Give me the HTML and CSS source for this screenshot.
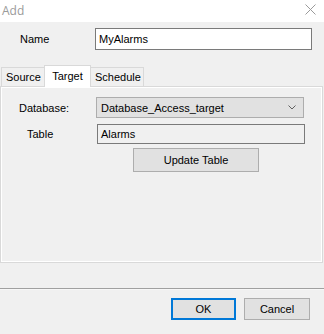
FILE: index.html
```html
<!DOCTYPE html>
<html lang="en">
<head>
  <meta charset="UTF-8">
  <title>Add</title>
  <link rel="stylesheet" href="styles.css">
</head>
<body>
  <div class="titlebar">
    <span class="title">Add</span>
    <svg class="close" width="11" height="11" viewBox="0 0 11 11">
      <path d="M0.5 0.5 L10.5 10.5 M10.5 0.5 L0.5 10.5" stroke="#9a9a9a" stroke-width="1" fill="none"/>
    </svg>
  </div>

  <div class="dialog">
    <div class="name-row">
      <label class="name-label">Name</label>
      <div class="textbox name-box">MyAlarms</div>
    </div>

    <div class="tabs">
      <div class="tab">Source</div>
      <div class="tab active">Target</div>
      <div class="tab">Schedule</div>
    </div>

    <div class="panel">
      <div class="row db-row">
        <label class="db-label">Database:</label>
        <div class="combo">
          <span>Database_Access_target</span>
          <svg class="chevron" width="8" height="5" viewBox="0 0 8 5">
            <path d="M0.5 0.5 L4 4 L7.5 0.5" stroke="#606060" stroke-width="1" fill="none"/>
          </svg>
        </div>
      </div>
      <div class="row table-row">
        <label class="table-label">Table</label>
        <div class="textbox table-box">Alarms</div>
      </div>
      <div class="row update-row">
        <button class="btn update-btn">Update Table</button>
      </div>
    </div>

    <div class="separator"></div>

    <div class="actions">
      <button class="btn ok-btn">OK</button>
      <button class="btn">Cancel</button>
    </div>
  </div>
</body>
</html>
```

FILE: styles.css
```css
body {
  margin: 0;
  font-family: 'Liberation Sans', Arial, sans-serif;
  font-size: 11px;
  color: #000;
  background-color: #f0f0f0;
  width: 324px;
  height: 334px;
  overflow: hidden;
}
.titlebar {
  height: 22px;
  background-color: #fff;
  display: flex;
  align-items: center;
  justify-content: space-between;
  padding: 0 8px 2px 2px;
  box-sizing: border-box;
}
.title {
  color: #9a9a9a;
  font-size: 12px;
  font-family: 'Open Sans', 'Liberation Sans', sans-serif;
}
.close {
  display: block;
  margin-top: -2px;
}
.dialog {
  background-color: #f0f0f0;
  height: 312px;
}
.name-row {
  display: flex;
  align-items: center;
  padding: 6px 0 0 20px;
}
.name-label {
  width: 75px;
}
.textbox {
  box-sizing: border-box;
  border: 1px solid #7a7a7a;
  background-color: #fff;
  padding: 0 3px;
  display: flex;
  align-items: center;
}
.name-box {
  width: 217px;
  height: 22px;
}
.tabs {
  display: flex;
  align-items: flex-end;
  margin-top: 15px;
  padding-left: 1px;
  height: 21px;
}
.tab {
  box-sizing: border-box;
  height: 19px;
  border: 1px solid #d9d9d9;
  border-bottom: none;
  background-color: #f0f0f0;
  padding: 0 4px;
  display: flex;
  align-items: center;
  margin-right: -1px;
}
.tab:first-child {
  width: 44px;
}
.tab.active {
  height: 22px;
  background-color: #fff;
  width: 47px;
  justify-content: center;
  position: relative;
  z-index: 1;
  margin-bottom: -1px;
  padding-bottom: 2px;
}
.tab:last-child {
  width: 54px;
}
.panel {
  box-sizing: border-box;
  width: 323px;
  height: 177px;
  border: 1px solid #d9d9d9;
  box-shadow: inset 0 0 0 1px #fff;
  padding-top: 10px;
}
.row {
  display: flex;
  align-items: center;
}
.db-row {
  padding-left: 18px;
}
.db-label {
  width: 77px;
}
.combo {
  box-sizing: border-box;
  width: 208px;
  height: 21px;
  border: 1px solid #adadad;
  background-color: #e1e1e1;
  display: flex;
  align-items: center;
  justify-content: space-between;
  padding: 0 7px 0 4px;
}
.chevron {
  display: block;
}
.table-row {
  margin-top: 6px;
  padding-left: 26px;
}
.table-label {
  width: 70px;
}
.table-box {
  width: 208px;
  height: 20px;
  background-color: #f0f0f0;
}
.update-row {
  margin-top: 4px;
  padding-left: 132px;
}
.btn {
  box-sizing: border-box;
  font-family: 'Liberation Sans', Arial, sans-serif;
  font-size: 11px;
  color: #000;
  background-color: #e1e1e1;
  border: 1px solid #adadad;
  padding: 0;
  margin: 0;
  height: 22px;
  width: 66px;
}
.update-btn {
  width: 126px;
  height: 24px;
}
.separator {
  margin-top: 25px;
  height: 1px;
  background-color: #a0a0a0;
  border-bottom: 1px solid #f7f7f7;
}
.actions {
  display: flex;
  justify-content: flex-end;
  gap: 8px;
  padding: 8px 14px 0 0;
}
.ok-btn {
  width: 65px;
  border: 2px solid #0078d7;
}
```
